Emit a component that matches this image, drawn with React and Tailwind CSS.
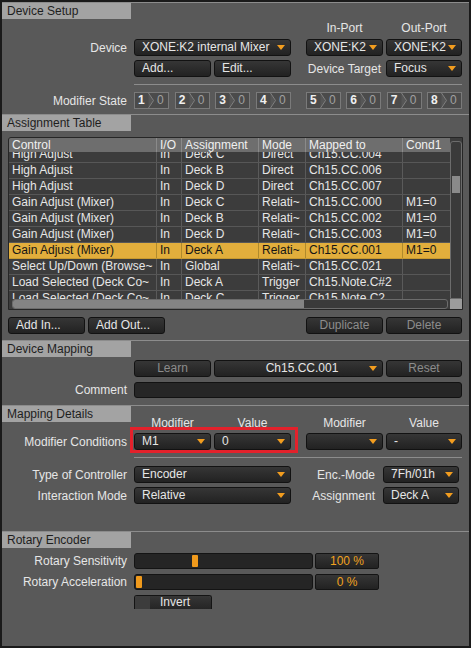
import React from "react";

const Tri = () => (
  <svg width="8" height="5" viewBox="0 0 8 5" className="shrink-0">
    <path d="M0 0H8L4 5Z" fill="#f29d1f" />
  </svg>
);

const ctl =
  "shrink-0 rounded-[3px] border border-[#121212] bg-linear-to-b from-[#363636] to-[#222222] text-[12px] leading-[15px] flex items-center";

function DD({ w, children, center }) {
  return (
    <div className={`${ctl} ${w} h-[17px] text-[#e6e6e6] pr-[5px] ${center ? "pl-[20px]" : "pl-[7px]"}`}>
      <span className={`flex-1 truncate ${center ? "text-center" : ""}`}>{children}</span>
      <Tri />
    </div>
  );
}

function Btn({ w, children, center, disabled }) {
  return (
    <div
      className={`${ctl} ${w} h-[17px] ${disabled ? "text-[#8c8c8c]" : "text-[#e6e6e6]"} ${
        center ? "justify-center" : "pl-[7px]"
      }`}
    >
      {children}
    </div>
  );
}

function Label({ children }) {
  return <div className="w-[132px] shrink-0 pr-[7px] text-right text-[#e6e6e6] leading-[16px]">{children}</div>;
}

function Section({ title, children, className }) {
  return (
    <div className={`border-t border-[#8c8c8c] ${className || ""}`}>
      <div className="w-[129px] h-[16px] bg-[#a3a3a3] text-[#1e1e1e] pl-[5px] leading-[16px]">{title}</div>
      {children}
    </div>
  );
}

function Mod({ n }) {
  return (
    <div className="w-[35px] h-[17px] border border-[#7a7a7a] bg-[#4b4b4b] flex items-center">
      <span className="w-[13px] pl-[3px] font-bold text-[#f0f0f0] leading-[15px]">{n}</span>
      <svg width="6" height="15" viewBox="0 0 6 15" className="shrink-0">
        <path d="M0.5 0L5.5 7.5L0.5 15" stroke="#7e7e7e" strokeWidth="1" fill="#565656" />
      </svg>
      <span className="pl-[3px] text-[#a0a0a0] leading-[15px]">0</span>
    </div>
  );
}

const rows = [
  ["High Adjust", "In", "Deck C", "Direct", "Ch15.CC.004", ""],
  ["High Adjust", "In", "Deck B", "Direct", "Ch15.CC.006", ""],
  ["High Adjust", "In", "Deck D", "Direct", "Ch15.CC.007", ""],
  ["Gain Adjust (Mixer)", "In", "Deck C", "Relati~", "Ch15.CC.000", "M1=0"],
  ["Gain Adjust (Mixer)", "In", "Deck B", "Relati~", "Ch15.CC.002", "M1=0"],
  ["Gain Adjust (Mixer)", "In", "Deck D", "Relati~", "Ch15.CC.003", "M1=0"],
  ["Gain Adjust (Mixer)", "In", "Deck A", "Relati~", "Ch15.CC.001", "M1=0"],
  ["Select Up/Down (Browse~", "In", "Global", "Relati~", "Ch15.CC.021", ""],
  ["Load Selected (Deck Co~", "In", "Deck A", "Trigger", "Ch15.Note.C#2", ""],
  ["Load Selected (Deck Co~", "In", "Deck C", "Trigger", "Ch15.Note.C2", ""],
];

const colW = ["w-[147px]", "w-[25px]", "w-[77px]", "w-[47px]", "w-[97px]", "w-[48px]"];
const headers = ["Control", "I/O", "Assignment", "Mode", "Mapped to", "Cond1"];

function TableRow({ r, hl }) {
  return (
    <div
      className={`flex h-[16px] border-b ${
        hl ? "bg-[#e2ae3c] border-[#c89a30] text-[#151515]" : "bg-[#3c3c3c] border-[#575757] text-[#e6e6e6]"
      }`}
    >
      {r.map((c, i) => (
        <div
          key={i}
          className={`${colW[i]} shrink-0 pl-[3px] leading-[15px] whitespace-nowrap overflow-hidden ${
            i > 0 ? (hl ? "border-l border-[#b08a2c]" : "border-l border-[#5a5a5a]") : ""
          }`}
        >
          {c}
        </div>
      ))}
    </div>
  );
}

const valBox =
  "ml-[2px] w-[64px] h-[16px] rounded-[2px] border border-[#141414] bg-linear-to-b from-[#363636] to-[#222222] text-[#f0a21e] text-center leading-[14px]";

export default function App() {
  return (
    <div className="w-[471px] h-[648px] overflow-hidden border-2 border-[#1a1a1a] bg-[#595959] font-['Liberation_Sans',Arial,sans-serif] text-[12px] leading-[16px] relative">
      {/* Device Setup */}
      <Section title="Device Setup" className="pb-[5px]">
        <div className="flex h-[17px] mt-[1px] leading-[17px] text-[#e6e6e6]">
          <div className="w-[132px]" />
          <div className="w-[157px]" />
          <div className="ml-[15px] w-[77px] text-center">In-Port</div>
          <div className="ml-[3px] w-[76px] text-center">Out-Port</div>
        </div>
        <div className="flex items-center h-[17px] mt-[2px]">
          <Label>Device</Label>
          <DD w="w-[157px]">XONE:K2 internal Mixer</DD>
          <div className="ml-[15px]">
            <DD w="w-[77px]">XONE:K2</DD>
          </div>
          <div className="ml-[3px]">
            <DD w="w-[76px]">XONE:K2</DD>
          </div>
        </div>
        <div className="flex items-center h-[17px] mt-[4px]">
          <Label></Label>
          <Btn w="w-[77px]">Add...</Btn>
          <div className="ml-[3px]">
            <Btn w="w-[77px]">Edit...</Btn>
          </div>
          <div className="w-[95px] pr-[5px] text-right text-[#e6e6e6]">Device Target</div>
          <DD w="w-[76px]">Focus</DD>
        </div>
        <div className="ml-[132px] mt-[7px] w-[328px] h-px bg-[#8c8c8c]" />
        <div className="flex items-center h-[17px] mt-[7px]">
          <Label>Modifier State</Label>
          <div className="w-[157px] flex justify-between">
            <Mod n="1" />
            <Mod n="2" />
            <Mod n="3" />
            <Mod n="4" />
          </div>
          <div className="ml-[15px] w-[156px] flex justify-between">
            <Mod n="5" />
            <Mod n="6" />
            <Mod n="7" />
            <Mod n="8" />
          </div>
        </div>
      </Section>

      {/* Assignment Table */}
      <Section title="Assignment Table" className="pb-[6px]">
        <div className="ml-[6px] mt-[6px] w-[455px] h-[173px] border border-[#262626] rounded-tl-[3px] flex bg-[#3c3c3c]">
          <div className="w-[441px] flex flex-col">
            <div className="flex h-[14px] bg-[#6e6e6e] text-[#f0f0f0] rounded-tl-[2px]">
              {headers.map((h, i) => (
                <div
                  key={i}
                  className={`${colW[i]} shrink-0 pl-[3px] leading-[14px] ${i > 0 ? "border-l border-[#8a8a8a]" : ""}`}
                >
                  {h}
                </div>
              ))}
            </div>
            <div className="h-[147px] overflow-hidden">
              <div className="mt-[-5px]">
                {rows.map((r, i) => (
                  <TableRow key={i} r={r} hl={i === 6} />
                ))}
              </div>
            </div>
            <div className="h-[10px] pl-[3px] pr-[2px] flex bg-[#3c3c3c]">
              <div className="flex-1 flex border border-[#6c6c6c] rounded-[3px] overflow-hidden bg-[#3a3a3a]">
                <div className="w-[291px] bg-[#848484]" />
              </div>
            </div>
          </div>
          <div className="w-[12px] flex flex-col">
            <div className="h-[161px] pt-[3px]">
              <div className="h-full border border-[#6c6c6c] rounded-t-[3px] bg-[#3a3a3a] pt-[34px] px-[1px]">
                <div className="h-[17px] bg-[#8a8a8a]" />
              </div>
            </div>
            <div className="h-[10px] bg-[#9c9c9c]" />
          </div>
        </div>
        <div className="flex h-[17px] mt-[7px] ml-[6px]">
          <Btn w="w-[77px]">Add In...</Btn>
          <div className="ml-[3px]">
            <Btn w="w-[77px]">Add Out...</Btn>
          </div>
          <div className="ml-[141px]">
            <Btn w="w-[77px]" center disabled>
              Duplicate
            </Btn>
          </div>
          <div className="ml-[3px]">
            <Btn w="w-[76px]" center disabled>
              Delete
            </Btn>
          </div>
        </div>
      </Section>

      {/* Device Mapping */}
      <Section title="Device Mapping" className="pb-[7px]">
        <div className="flex items-center h-[17px] mt-[3px]">
          <Label></Label>
          <Btn w="w-[77px]" center disabled>
            Learn
          </Btn>
          <div className="ml-[3px]">
            <DD w="w-[169px]" center>
              Ch15.CC.001
            </DD>
          </div>
          <div className="ml-[3px]">
            <Btn w="w-[76px]" center disabled>
              Reset
            </Btn>
          </div>
        </div>
        <div className="flex items-center h-[16px] mt-[5px]">
          <Label>Comment</Label>
          <div className="w-[328px] h-[16px] rounded-[3px] border border-[#121212] bg-[#262626]" />
        </div>
      </Section>

      {/* Mapping Details */}
      <Section title="Mapping Details" className="pb-[27px]">
        <div className="flex mt-[-5px] h-[12px] leading-[12px] text-[#e6e6e6]">
          <div className="w-[132px]" />
          <div className="w-[77px] text-center">Modifier</div>
          <div className="ml-[3px] w-[77px] text-center">Value</div>
          <div className="ml-[15px] w-[77px] text-center">Modifier</div>
          <div className="ml-[3px] w-[76px] text-center">Value</div>
        </div>
        <div className="flex items-center h-[17px] mt-[4px]">
          <Label>Modifier Conditions</Label>
          <DD w="w-[77px]">M1</DD>
          <div className="ml-[3px]">
            <DD w="w-[77px]">0</DD>
          </div>
          <div className="ml-[15px]">
            <DD w="w-[77px]"></DD>
          </div>
          <div className="ml-[3px]">
            <DD w="w-[76px]">-</DD>
          </div>
        </div>
        <div className="ml-[132px] mt-[7px] w-[328px] h-px bg-[#8c8c8c]" />
        <div className="flex items-center h-[17px] mt-[8px]">
          <Label>Type of Controller</Label>
          <DD w="w-[157px]">Encoder</DD>
          <div className="w-[92px] pr-[8px] text-right text-[#e6e6e6]">Enc.-Mode</div>
          <DD w="w-[76px]">7Fh/01h</DD>
        </div>
        <div className="flex items-center h-[17px] mt-[4px]">
          <Label>Interaction Mode</Label>
          <DD w="w-[157px]">Relative</DD>
          <div className="w-[92px] pr-[8px] text-right text-[#e6e6e6]">Assignment</div>
          <DD w="w-[76px]">Deck A</DD>
        </div>
      </Section>

      {/* Rotary Encoder */}
      <Section title="Rotary Encoder">
        <div className="flex items-center h-[16px] mt-[5px]">
          <Label>Rotary Sensitivity</Label>
          <div className="w-[179px] h-[16px] rounded-[3px] border border-[#141414] bg-[#252525] flex items-center pl-[57px]">
            <div className="w-[6px] h-[12px] rounded-[1px] bg-[#f09a1c]" />
          </div>
          <div className={valBox}>100 %</div>
        </div>
        <div className="flex items-center h-[16px] mt-[5px]">
          <Label>Rotary Acceleration</Label>
          <div className="w-[179px] h-[16px] rounded-[3px] border border-[#141414] bg-[#252525] flex items-center pl-[1px]">
            <div className="w-[6px] h-[12px] rounded-[1px] bg-[#f09a1c]" />
          </div>
          <div className={valBox}>0 %</div>
        </div>
        <div className="flex mt-[5px]">
          <div className="w-[132px]" />
          <div className="w-[78px] h-[14px] flex rounded-t-[3px] border border-b-0 border-[#141414] overflow-hidden">
            <div className="w-[15px] bg-[#3c3c3c]" />
            <div className="flex-1 bg-linear-to-b from-[#363636] to-[#252525] text-[#e6e6e6] pl-[10px] leading-[13px]">
              Invert
            </div>
          </div>
        </div>
      </Section>

      {/* annotation highlight */}
      <div className="absolute left-[128px] top-[425px] w-[168px] h-[26px] border-[3px] border-[#e3212b]" />
    </div>
  );
}
